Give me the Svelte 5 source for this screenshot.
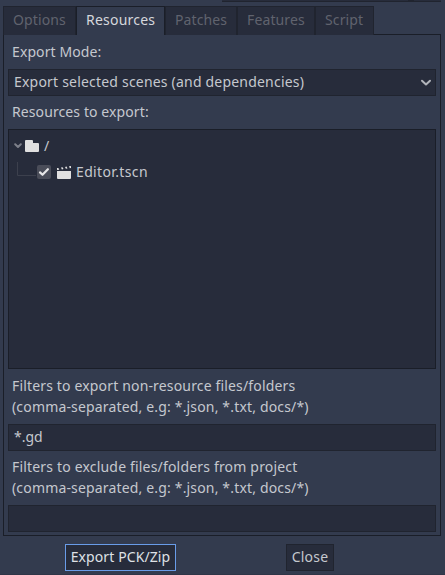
<script>
  const tabs = [
    { name: 'Options', width: 73 },
    { name: 'Resources', width: 89, active: true },
    { name: 'Patches', width: 72 },
    { name: 'Features', width: 78 },
    { name: 'Script', width: 59 }
  ];
  let filter = $state('*.gd');
  let exclude = $state('');
</script>

<main class="dialog">
  <div class="upper"><i></i></div>
  <nav class="tabs">
    {#each tabs as tab}
      <div class="tab" class:active={tab.active} style:width="{tab.width}px">{tab.name}</div>
    {/each}
    <div class="rest"></div>
  </nav>
  <section class="panel">
    <div class="label mode">Export Mode:</div>
    <div class="field select">
      <span class="choice">Export selected scenes (and dependencies)</span>
      <svg class="arrow" width="12" height="8" viewBox="0 0 12 8"><path d="M2 1.7 6 5.4l4-3.7" fill="none" stroke="#b2b5bb" stroke-width="2" stroke-linecap="round" stroke-linejoin="round" /></svg>
    </div>
    <div class="label resources">Resources to export:</div>
    <div class="tree">
      <div class="row root">
        <svg class="fold" width="8" height="6" viewBox="0 0 8 6"><path d="M1.2 1.3 4 4l2.8-2.7" fill="none" stroke="#7d808a" stroke-width="2" stroke-linecap="round" stroke-linejoin="round" /></svg>
        <svg class="folder" width="14" height="12" viewBox="0 0 14 12"><path d="M1 0h6a1 1 0 0 1 1 1v2h5a1 1 0 0 1 1 1v7a1 1 0 0 1-1 1H1a1 1 0 0 1-1-1V1a1 1 0 0 1 1-1z" fill="#e0e0e0" /></svg>
        <span>/</span>
      </div>
      <div class="row child">
        <svg class="branch" width="19" height="14" viewBox="0 0 19 14"><path d="M.5 0v13.5H19" fill="none" stroke="#3c404d" /></svg>
        <svg class="check" width="14" height="14" viewBox="0 0 14 14"><rect width="14" height="14" rx="2" fill="#4a4d59" /><path d="M3 7.4 5.5 9.8 10.9 4.2" fill="none" stroke="#e6e6e7" stroke-width="2.2" stroke-linecap="round" stroke-linejoin="round" /></svg>
        <svg class="scene" width="14" height="13" viewBox="0 0 14 13"><path d="M0 5h14v7a1 1 0 0 1-1 1H1a1 1 0 0 1-1-1zM0 2.1l1.4-.2.9 1.9L0 4.1zM4 1.5l1.6-.3.9 1.9-1.6.3zM8 .9l1.6-.3.9 1.9-1.6.3zM12 .3l2-.3v2l-1.2.3z" fill="#e0e0e0" /></svg>
        <span class="file">Editor.tscn</span>
      </div>
    </div>
    <div class="description include">
      <div><span class="f1">Filters to export non-resource files/folders</span></div>
      <div><span class="f2">(comma-separated, e.g: *.json, *.txt, docs/*)</span></div>
    </div>
    <input class="field" aria-label="Include filters" bind:value={filter} />
    <div class="description exclude">
      <div><span class="f3">Filters to exclude files/folders from project</span></div>
      <div><span class="f2">(comma-separated, e.g: *.json, *.txt, docs/*)</span></div>
    </div>
    <input class="field" aria-label="Exclude filters" bind:value={exclude} />
  </section>
  <footer>
    <button class="export">Export PCK/Zip</button>
    <button class="close">Close</button>
  </footer>
</main>

<style>
  .dialog, .dialog * { box-sizing: border-box; }
  .dialog {
    width: 445px;
    height: 575px;
    overflow: hidden;
    background: #333b4e;
    border-bottom: 1px solid #2f3547;
    color: #c5c8ce;
    font: 14px/20px "Noto Sans", sans-serif;
    white-space: nowrap;
  }
  svg { display: block; flex: none; }
  .upper { display: flex; width: 219px; height: 2px; margin-left: 222px; background: #272c3b; border-bottom: 1px solid #20242f; }
  .upper i { width: 6px; height: 1px; margin-left: 186px; background: #20242f; }
  .tabs { display: flex; height: 29px; margin: 4px 4px 0 3px; }
  .tab {
    flex: none;
    padding: 3px 0 0 9px;
    background: #272c3b;
    border: solid #20242f;
    border-width: 1px 1px 0;
    color: #60636e;
    letter-spacing: .12px;
  }
  .tab.active { background: #333b4e; border-color: #1a1e28; color: #d5d7dc; letter-spacing: .22px; }
  .rest { flex: 1; border-bottom: 1px solid #1a1e28; margin-top: 28px; height: 1px; }
  .panel { width: 438px; height: 501px; margin-left: 3px; padding: 0 4px; border: solid #1a1e28; border-width: 0 1px 1px; }
  .label { padding-left: 4px; letter-spacing: .1px; }
  .mode { height: 34px; padding-top: 7px; }
  .field { display: flex; width: 428px; height: 27px; padding: 0 5px 2px; background: #272c3b; border: 1px solid #20242f; align-items: center; }
  .select { justify-content: space-between; padding-right: 3px; }
  .arrow { margin-top: 2px; }
  .choice { letter-spacing: .2px; }
  .resources { height: 33px; padding-top: 6px; }
  .tree { width: 428px; height: 240px; padding: 3px 0 0 5px; background: #272c3b; border: 1px solid #1a1e28; }
  .row { display: flex; height: 26px; align-items: center; }
  .folder { margin: 0 5px 0 3px; }
  .branch { align-self: flex-start; margin: 3px 1px 0 3px; }
  .scene { margin: 0 5px 0 6px; }
  .file { letter-spacing: .36px; }
  .description { padding-left: 4px; line-height: 21px; }
  .f1 { letter-spacing: .16px; }
  .f2 { letter-spacing: .165px; }
  .f3 { letter-spacing: .18px; }
  .include { height: 55px; padding-top: 6px; }
  .exclude { height: 54px; padding-top: 5px; }
  input, button { color: inherit; font: inherit; outline: none; border-radius: 0; margin: 0; }
  footer { display: flex; padding: 8px 0 0 65px; }
  button { height: 27px; padding: 0 0 2px; background: #272c3b; border: 1px solid #20242f; letter-spacing: .1px; }
  .export { width: 111px; border-color: #699ce8; color: #dfe1e6; }
  .close { width: 48px; margin-left: 110px; letter-spacing: .2px; }
</style>
